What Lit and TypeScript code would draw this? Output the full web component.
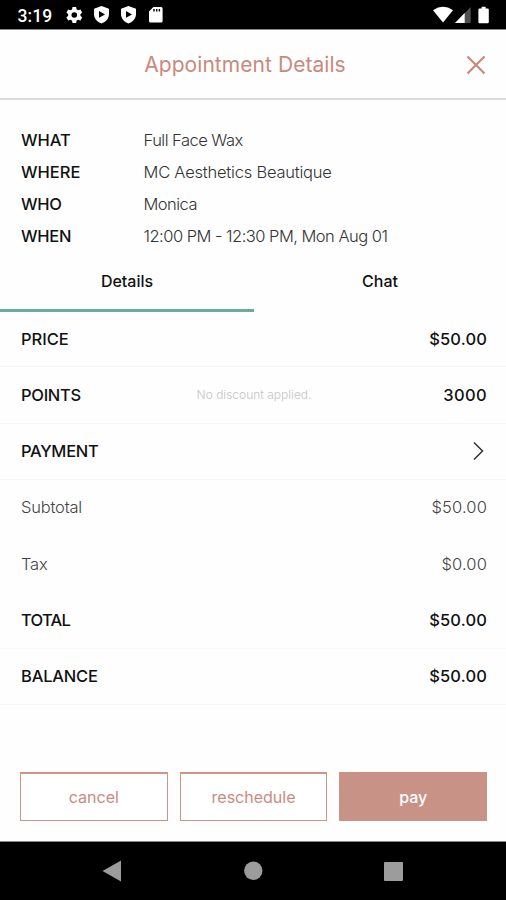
import { LitElement, html, css, svg } from "lit";
import { customElement } from "lit/decorators.js";
import { classMap } from "lit/directives/class-map.js";

interface Fact {
  label: string;
  value: string;
  cls: string;
}

interface Row {
  label: string;
  value?: string;
  note?: string;
  light?: boolean;
  line?: "none" | "faint" | "soft";
  cls: string;
}

const FACTS: Fact[] = [
  { label: "WHAT", value: "Full Face Wax", cls: "f-what" },
  { label: "WHERE", value: "MC Aesthetics Beautique", cls: "f-where" },
  { label: "WHO", value: "Monica", cls: "f-who" },
  { label: "WHEN", value: "12:00 PM - 12:30 PM, Mon Aug 01", cls: "f-when" },
];

const ROWS: Row[] = [
  { label: "PRICE", value: "$50.00", line: "soft", cls: "r-price" },
  { label: "POINTS", value: "3000", note: "No discount applied.", line: "soft", cls: "r-points" },
  { label: "PAYMENT", line: "soft", cls: "r-payment" },
  { label: "Subtotal", value: "$50.00", light: true, line: "none", cls: "r-subtotal" },
  { label: "Tax", value: "$0.00", light: true, line: "none", cls: "r-tax" },
  { label: "TOTAL", value: "$50.00", line: "faint", cls: "r-total" },
  { label: "BALANCE", value: "$50.00", line: "soft", cls: "r-balance" },
];

const shield = svg`<path fill="#fff" fill-rule="evenodd" d="M8.5 0 L16 2.7 V8 C16 12.4 13 15.8 8.5 17.5 C4 15.8 1 12.4 1 8 V2.7 Z M6 5 V11.8 L12 8.4 Z"/>`;

@customElement("app-root")
export class AppRoot extends LitElement {
  static styles = css`
    :host {
      display: flex;
      flex-direction: column;
      box-sizing: border-box;
      width: 506px;
      height: 900px;
      overflow: hidden;
      background: #fefefe;
      color: #111;
      font: 500 16.5px/24px Inter, "Liberation Sans", sans-serif;
      white-space: nowrap;
    }
    svg { display: block; flex: none; }
    .status {
      flex: none;
      height: 29px;
      box-sizing: border-box;
      padding: 3px 13px 0 17.5px;
      background: #000;
      display: flex;
      align-items: center;
      color: #fff;
      font: 500 17.5px/24px Roboto, sans-serif;
    }
    .clock { width: 48.500px; letter-spacing: 0.1px; }
    .signals { margin-left: auto; }
    .edge { flex: none; height: 1px; background: #888; }
    .header {
      flex: none;
      height: 70px;
      box-sizing: border-box;
      border-bottom: 2px solid #d9dbd9;
      display: grid;
      grid-template-columns: 1fr auto 1fr;
      align-items: center;
      padding: 2px 20px 0 4px;
      color: #c9897c;
    }
    .title { grid-column: 2; font-size: 21px; font-weight: 400; letter-spacing: 0.06px; }
    .close { justify-self: end; }
    .facts {
      flex: none;
      margin: 0;
      padding: 24px 21px 0;
      display: grid;
      grid-template-columns: 122.5px 1fr;
      grid-auto-rows: 32px;
      align-items: center;
    }
    .facts dt, .facts dd { margin: 0; }
    .facts dd { font-weight: 300; color: #333; letter-spacing: -0.52px; }
    .facts dd.f-where { letter-spacing: -0.22px; }
    .facts dt.f-who, .facts dt.f-when { letter-spacing: -0.3px; }
    .tabs { flex: none; height: 60px; display: flex; }
    .tab {
      flex: 1;
      display: flex;
      justify-content: center;
      box-sizing: border-box;
      padding-top: 17px;
      border-bottom: 3px solid transparent;
      font-size: 16px;
    }
    .tab.active { border-bottom-color: #69ad9c; flex: 0 0 254px; }
    .rows {
      flex: none;
      height: 394px;
      margin-top: -1px;
      display: grid;
      grid-template-rows: repeat(7, 1fr);
    }
    .row {
      display: grid;
      grid-template-columns: 1fr auto 1fr;
      align-items: center;
      box-sizing: border-box;
      padding: 0 19px 0 21px;
      border-bottom: 1px solid #f5f5f5;
    }
    .row.none { border-bottom-color: transparent; }
    .row.faint { border-bottom-color: #fafafa; }
    .row.light { font-weight: 300; color: #444; }
    .row .label { letter-spacing: -0.2px; }
    .r-price .label { letter-spacing: 0; }
    .r-points .label, .r-payment .label { letter-spacing: -0.3px; }
    .r-total .label { letter-spacing: -0.75px; }
    .note { font-size: 12px; font-weight: 300; color: #c4c4c4; }
    .value { grid-column: 3; justify-self: end; letter-spacing: 0.15px; }
    .r-points .value { letter-spacing: 0.35px; }
    .chev { grid-column: 3; justify-self: end; margin-right: 3px; }
    .actions { flex: 1; display: flex; gap: 12px; padding: 67px 19px 0 20px; }
    .btn {
      flex: 1;
      box-sizing: border-box;
      height: 49px;
      border: 1.5px solid #cf9388;
      border-top-width: 2px;
      background: #fff;
      color: #c98b80;
      display: flex;
      align-items: center;
      justify-content: center;
      font-size: 16px;
      font-weight: 400;
    }
    .btn.solid { background: #c99286; border-color: #c99286; color: #fff; font-weight: 500; }
    .nav { flex: none; height: 58px; background: #000; }
  `;

  render() {
    return html`
      <div class="status">
        <span class="clock">3:19</span>
        <svg width="100" height="20" viewBox="0 0 100 20">
          <g transform="translate(0.3,1)">
            <path fill="#fff" fill-rule="evenodd" d="M6.2 0h3.6l.5 2.4 1.5.9 2.3-.8 1.8 3-1.8 1.7v1.6l1.8 1.7-1.8 3-2.3-.8-1.5.9-.5 2.4H6.2l-.5-2.4-1.5-.9-2.3.8-1.8-3 1.8-1.7V7.2L.1 5.5l1.8-3 2.3.8 1.5-.9ZM8 5.2a2.8 2.8 0 1 0 0 5.6a2.8 2.8 0 0 0 0-5.6Z"/>
          </g>
          <g transform="translate(27,0)">${shield}</g>
          <g transform="translate(54,0)">${shield}</g>
          <path fill="#fff" fill-rule="evenodd" d="M87.4 1H95q1.6 0 1.6 1.6V15q0 1.6-1.6 1.6H84.6Q83 16.6 83 15V5.4ZM87.3 3v2.6h1.4V3ZM90 3v2.6h1.4V3ZM92.7 3v2.6h1.4V3Z"/>
        </svg>
        <svg class="signals" width="60" height="20" viewBox="0 0 60 20">
          <path fill="#fff" d="M0 4.2Q10 -2.7 20 4.2L10 16.5Z"/>
          <path fill="#505050" d="M37.7 1V17H22Z"/>
          <path fill="#fff" d="M31.7 7V17H22Z"/>
          <path fill="#fff" d="M48.6 .7h4v1.7h2.2q1 0 1 1V16q0 1.2-1 1.2H46.4q-1 0-1-1.200V3.4q0-1 1-1h2.200Z"/>
        </svg>
      </div>
      <div class="edge"></div>
      <div class="header">
        <span class="title">Appointment Details</span>
        <svg class="close" width="20" height="20" viewBox="0 0 20 20" stroke="#c9897c" stroke-width="2.2" fill="none">
          <path d="M1.5 1.5 18.5 18.5M18.5 1.5 1.5 18.5" />
        </svg>
      </div>
      <dl class="facts">
        ${FACTS.map((f) => html`<dt class=${f.cls}>${f.label}</dt><dd class=${f.cls}>${f.value}</dd>`)}
      </dl>
      <div class="tabs">
        <div class="tab active">Details</div>
        <div class="tab">Chat</div>
      </div>
      <div class="rows">
        ${ROWS.map(
          (r) => html`<div class=${classMap({ row: true, light: !!r.light, [r.line ?? "soft"]: true, [r.cls]: true })}>
            <span class="label">${r.label}</span>
            ${r.note ? html`<span class="note">${r.note}</span>` : ""}
            ${r.value
              ? html`<span class="value">${r.value}</span>`
              : html`<svg class="chev" width="12" height="20" viewBox="0 0 12 20" fill="none" stroke="#333" stroke-width="1.5"><path d="M2 1.5 10.5 10 2 18.5"/></svg>`}
          </div>`
        )}
      </div>
      <div class="actions">
        <div class="btn">cancel</div>
        <div class="btn">reschedule</div>
        <div class="btn solid">pay</div>
      </div>
      <div class="edge"></div>
      <div class="nav">
        <svg width="506" height="58" viewBox="0 842 506 58" fill="#9c9c9c">
          <path d="M102.5 871 121 860.5V881.5Z"/>
          <circle cx="253.3" cy="870.8" r="9.2"/>
          <rect x="384" y="862" width="19" height="19" rx="1"/>
        </svg>
      </div>
    `;
  }
}
